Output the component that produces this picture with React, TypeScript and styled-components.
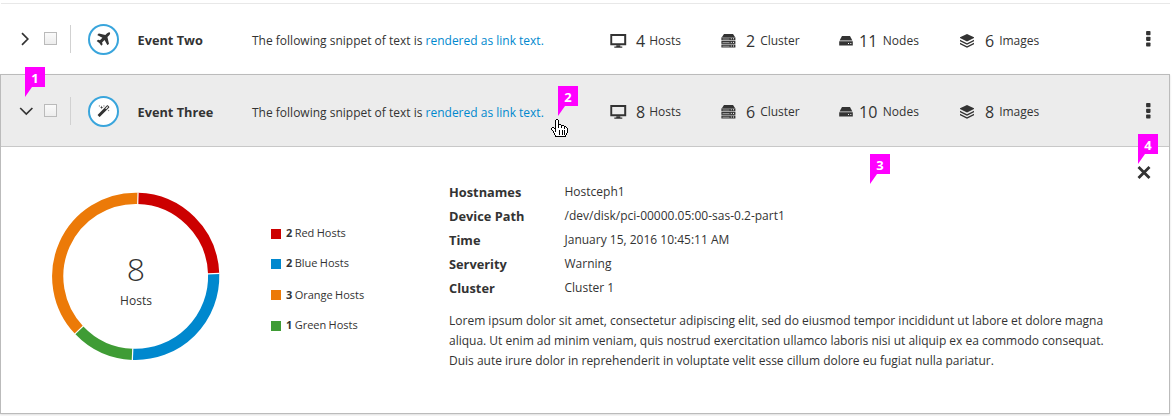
import React from "react";
import styled, { createGlobalStyle } from "styled-components";

const GlobalStyle = createGlobalStyle`
  *, *::before, *::after { box-sizing: border-box; }
  body {
    margin: 0;
    background: #fff;
    color: #333;
    font-family: "Open Sans", "Noto Sans", sans-serif;
    font-size: 12px;
    line-height: 20px;
  }
`;

const Page = styled.main`
  position: relative;
  width: 1172px;
  height: 416px;
  overflow: hidden;
  padding-top: 3px;
`;

const ListItem = styled.section`
  width: 1169px;
  margin-left: 1px;
  border-top: 1px solid #e8e8e8;
`;

const ExpandedItem = styled.section`
  width: 1170px;
  height: 340px;
  border: 1px solid #bbb;
  box-shadow: 0 1px 2px rgba(0, 0, 0, 0.14);
`;

const Row = styled.div<{ $active?: boolean }>`
  display: flex;
  align-items: center;
  height: ${(p) => (p.$active ? 72 : 70)}px;
  padding: ${(p) => (p.$active ? "1px 0 0" : "0")};
  background: ${(p) => (p.$active ? "#ececec" : "#fff")};
  border-bottom: ${(p) => (p.$active ? "1px solid #c8c8c8" : "0")};
`;

const Toggle = styled.button`
  display: flex;
  width: 14px;
  height: 14px;
  margin: 0 11px 0 17px;
  padding: 0;
  border: 0;
  background: none;
`;

const Check = styled.span`
  width: 13px;
  height: 13px;
  margin: 0 13px 1px 1px;
  border: 1px solid #bababa;
  background: linear-gradient(#fafafa, #ededed);
`;

const Divider = styled.span`
  width: 1px;
  height: 28px;
  margin-right: 17px;
  background: #d1d1d1;
`;

const IconRing = styled.span`
  display: flex;
  align-items: center;
  justify-content: center;
  width: 31px;
  height: 31px;
  margin: 1px 18.5px 0 0;
  border: 2px solid #39a5dc;
  border-radius: 50%;
  background: #fff;
`;

const Name = styled.strong`
  width: 114.5px;
  padding-top: 2px;
  font-size: 12.75px;
  font-weight: 700;
  white-space: nowrap;
`;

const Snippet = styled.span`
  width: 358px;
  padding-top: 3px;
  white-space: nowrap;
`;

const Link = styled.a`
  color: #0088ce;
`;

const Stat = styled.span<{ $width: number; $active?: boolean }>`
  display: flex;
  align-items: center;
  width: ${(p) => p.$width}px;
  padding-top: ${(p) => (p.$active ? 1 : 3)}px;
  white-space: nowrap;
`;

const StatIcon = styled.span<{ $width: number }>`
  display: flex;
  width: ${(p) => p.$width}px;
`;

const StatCount = styled.span<{ $gap: number }>`
  margin-right: ${(p) => p.$gap}px;
  font-size: 16px;
`;

const Kebab = styled.button`
  display: flex;
  padding: 0;
  border: 0;
  margin-left: 65px;
  background: none;
`;

const Body = styled.div`
  display: flex;
  position: relative;
  align-items: flex-start;
`;

const Donut = styled.figure`
  position: relative;
  width: 170px;
  height: 170px;
  margin: 44px 0 0 50px;
`;

const DonutLabel = styled.figcaption`
  position: absolute;
  inset: 0;
  display: flex;
  flex-direction: column;
  align-items: center;
  padding-top: 56px;
`;

const DonutTotal = styled.span`
  font-size: 32px;
  font-weight: 300;
  line-height: 44px;
`;

const Legend = styled.ul`
  width: 178px;
  margin: 77px 0 0 50px;
  padding: 0;
  list-style: none;
`;

const LegendItem = styled.li<{ $gap: number; $color: string }>`
  display: flex;
  align-items: center;
  height: 20px;
  margin-bottom: ${(p) => p.$gap}px;
  font-size: 11px;

  &::before {
    content: "";
    width: 10px;
    height: 10px;
    margin-right: 5px;
    background: ${(p) => p.$color};
  }
`;

const LegendText = styled.span<{ $lift: number }>`
  padding-bottom: ${(p) => p.$lift}px;
  white-space: nowrap;
  word-spacing: -0.5px;
`;

const Details = styled.div`
  padding-top: 33px;
`;

const Facts = styled.dl`
  display: grid;
  grid-template-columns: 115.5px auto;
  grid-auto-rows: 24px;
  margin: 0 0 11px;
  line-height: 24px;
`;

const Term = styled.dt`
  font-size: 12.8px;
  font-weight: 700;
`;

const Value = styled.dd`
  margin: 0;
`;

const Paragraph = styled.p`
  margin: 0;
  white-space: pre-line;
`;

const CloseButton = styled.button`
  position: absolute;
  top: 19px;
  right: 18px;
  display: flex;
  padding: 0;
  border: 0;
  background: none;
`;

const Callout = styled.span<{ $x: number; $y: number }>`
  position: absolute;
  left: ${(p) => p.$x}px;
  top: ${(p) => p.$y}px;
  width: 20px;
  height: 30px;
  background: #f0f;
  clip-path: polygon(0 0, 100% 0, 100% 20px, 7px 20px, 0 100%);
  color: #fff;
  font-size: 13px;
  font-weight: 700;
  line-height: 22px;
  text-align: center;
`;

const Pointer = styled.svg`
  position: absolute;
  left: 551px;
  top: 119px;
`;

const AngleRight = () => (
  <svg width="14" height="14" viewBox="0 0 14 14" fill="none" stroke="#333" strokeWidth="1.7">
    <path d="M4 1.2 9.8 7 4 12.8" />
  </svg>
);

const AngleDown = () => (
  <svg width="15" height="14" viewBox="0 0 15 14" fill="none" stroke="#333" strokeWidth="1.7" overflow="visible">
    <path d="M2.200 4 8.300 10 14.400 4" />
  </svg>
);

const PlaneIcon = () => (
  <svg width="17" height="17" viewBox="0 0 1792 1792" fill="#333">
    <path d="M1568 160q44 52 12 148t-108 172l-161 161 160 696q5 19-12 33l-128 96q-7 6-19 6-4 0-7-1-15-3-21-16l-279-508-259 259 53 194q5 17-8 31l-96 96q-9 9-23 9h-2q-15-2-24-13l-189-252-252-189q-11-7-13-23-1-13 9-25l96-97q9-9 23-9 6 0 8 1l194 53 259-259-508-279q-14-8-17-24-2-16 9-27l128-128q14-13 30-8l665 159 160-160q76-76 172-108t148 12z" />
  </svg>
);

const MagicIcon = () => (
  <svg width="13" height="13" viewBox="0 0 1792 1792" fill="#333">
    <path d="M1254 581l293-293-107-107-293 293zm447-293q0 27-18 45l-1286 1286q-18 18-45 18t-45-18l-198-198q-18-18-18-45t18-45l1286-1286q18-18 45-18t45 18l198 198q18 18 18 45zm-1351-190l98 30-98 30-30 98-30-98-98-30 98-30 30-98zm350 162l196 60-196 60-60 196-60-196-196-60 196-60 60-196zm930 478l98 30-98 30-30 98-30-98-98-30 98-30 30-98zm-640-640l98 30-98 30-30 98-30-98-98-30 98-30 30-98z" />
  </svg>
);

const ScreenIcon = () => (
  <svg width="17" height="14" viewBox="0 0 17 14" fill="#333">
    <path fillRule="evenodd" d="M.3 0h15.9v11.2H.3zM2.200 2v7.200h12V2z" />
    <path d="M6.3 11.2h4v1.3h2v1.3h-8v-1.3h2z" />
  </svg>
);

const ClusterIcon = () => (
  <svg width="15" height="14" viewBox="0 0 15 14">
    <path fill="#333" d="M3 0h9l2 3H1z" />
    {[3.3, 6.9, 10.5].map((y) => (
      <g key={y}>
        <rect x=".4" y={y} width="14" height="3" fill="#333" />
        <path d={`M1.5 ${y + 1.7}h7`} stroke="#aaa" strokeWidth=".9" />
        <path d={`M9.8 ${y + 1.5}h1M12 ${y + 1.5}h1`} stroke="#fff" strokeWidth="1" />
      </g>
    ))}
  </svg>
);

const NodeIcon = () => (
  <svg width="14" height="10" viewBox="0 0 14 10" fill="#333">
    <path d="M3 0h8l2.4 4.6H.6z" />
    <path fillRule="evenodd" d="M.2 5.3h13.6v4.2H.2zM9 7v1h1V7zM11.3 7v1h1V7z" />
  </svg>
);

const LayersIcon = () => (
  <svg width="14" height="14" viewBox="0 0 14 14" fill="#333">
    <path d="M7 0 14 3.2v.9L7 7.600 0 4.100v-.9z" />
    <path d="M0 5.8 7 9.200l7-3.400v1.500l-7 3.500-7-3.500z" />
    <path d="M0 8.8l7 3.4 7-3.4v1.500l-7 3.500-7-3.500z" />
  </svg>
);

const KebabIcon = () => (
  <svg width="6" height="16" viewBox="0 0 6 16" fill="#333">
    <rect x="1.1" y="0" width="4.4" height="4.2" rx=".8" />
    <rect x="1.1" y="5.7" width="4.4" height="4.2" rx=".8" />
    <rect x="1.1" y="11.4" width="4.4" height="4.2" rx=".8" />
  </svg>
);

const CloseIcon = () => (
  <svg width="14" height="13" viewBox="0 0 14 13" stroke="#333" strokeWidth="2.8">
    <path d="M1.500 1 12.500 12M12.500 1 1.500 12" />
  </svg>
);

const COLORS = { red: "#c00", blue: "#0088ce", orange: "#ec7a08", green: "#3f9c35" };

const polar = (r: number, deg: number) => {
  const a = (deg * Math.PI) / 180;
  return `${(84.7 + r * Math.sin(a)).toFixed(2)} ${(85.4 - r * Math.cos(a)).toFixed(2)}`;
};

const ARCS = [
  { from: 1.6, to: 88, color: COLORS.red },
  { from: 88, to: 182.3, color: COLORS.blue },
  { from: 182.3, to: 226.6, color: COLORS.green },
  { from: 226.6, to: 361.6, color: COLORS.orange },
];

const DonutChart = () => (
  <svg width="170" height="170" viewBox="0 0 170 170" fill="none">
    {ARCS.map((a) => (
      <path
        key={a.color}
        d={`M${polar(78, a.from)}A78 78 0 0 1 ${polar(78, a.to)}`}
        stroke={a.color}
        strokeWidth="11.2"
      />
    ))}
    {ARCS.map((a) => (
      <path key={a.color} d={`M${polar(72, a.from)}L${polar(84, a.from)}`} stroke="#fff" strokeWidth="1.2" />
    ))}
  </svg>
);

const STATS = [
  { label: "Hosts", icon: <ScreenIcon />, width: 111, iconWidth: 26, gap: 4 },
  { label: "Cluster", icon: <ClusterIcon />, width: 118, iconWidth: 25, gap: 5 },
  { label: "Nodes", icon: <NodeIcon />, width: 121, iconWidth: 20, gap: 5.5 },
  { label: "Images", icon: <LayersIcon />, width: 120, iconWidth: 25, gap: 5 },
];

interface EventRowProps {
  name: string;
  icon: React.ReactNode;
  counts: number[];
  active?: boolean;
}

const EventRow = ({ name, icon, counts, active }: EventRowProps) => (
  <Row $active={active}>
    <Toggle aria-label="Toggle details">{active ? <AngleDown /> : <AngleRight />}</Toggle>
    <Check />
    <Divider />
    <IconRing>{icon}</IconRing>
    <Name>{name}</Name>
    <Snippet>
      The following snippet of text is <Link>rendered as link text.</Link>
    </Snippet>
    {STATS.map((s, i) => (
      <Stat key={s.label} $width={s.width} $active={active}>
        <StatIcon $width={s.iconWidth}>{s.icon}</StatIcon>
        <StatCount $gap={s.gap}>{counts[i]}</StatCount>
        {s.label}
      </Stat>
    ))}
    <Kebab aria-label="Actions">
      <KebabIcon />
    </Kebab>
  </Row>
);

const LEGEND = [
  { count: 2, label: "Red Hosts", color: COLORS.red, gap: 10, lift: 2 },
  { count: 2, label: "Blue Hosts", color: COLORS.blue, gap: 11, lift: 2 },
  { count: 3, label: "Orange Hosts", color: COLORS.orange, gap: 11, lift: 0 },
  { count: 1, label: "Green Hosts", color: COLORS.green, gap: 0, lift: 2 },
];

const FACTS = [
  ["Hostnames", "Hostceph1"],
  ["Device Path", "/dev/disk/pci-00000.05:00-sas-0.2-part1"],
  ["Time", "January 15, 2016 10:45:11 AM"],
  ["Serverity", "Warning"],
  ["Cluster", "Cluster 1"],
];

const TEXT = `Lorem ipsum dolor sit amet, consectetur adipiscing elit, sed do eiusmod tempor incididunt ut labore et dolore magna
aliqua. Ut enim ad minim veniam, quis nostrud exercitation ullamco laboris nisi ut aliquip ex ea commodo consequat.
Duis aute irure dolor in reprehenderit in voluptate velit esse cillum dolore eu fugiat nulla pariatur.`;

// Pixel cursor: "#" is outline, "o" is fill.
const HAND = [
  ".....##..........",
  "....#oo#.........",
  "....#oo#.........",
  "....#oo#.........",
  "....#oo#.........",
  "....#oo###.......",
  "....#oo#oo###....",
  "....#oo#oo#oo##..",
  ".##.#oo#oo#oo#o#.",
  "#oo##oooooooo#oo#",
  "#ooo#ooooooooooo#",
  ".#oo#ooo#oo#o#oo#",
  "..#o#ooo#oo#o#oo#",
  "..#ooooo#oo#o#oo#",
  "...#oooo#oo#o#o#.",
  "...#oooo#oo#o#o#.",
  "....#ooooooooo#..",
  "....###########..",
];

const HandPointer = () => (
  <Pointer width="17" height="18" viewBox="0 0 17 18" shapeRendering="crispEdges">
    {HAND.flatMap((line, y) =>
      [...line].map((c, x) =>
        c === "." ? null : (
          <rect key={`${x}-${y}`} x={x} y={y} width="1" height="1" fill={c === "#" ? "#000" : "#fff"} />
        )
      )
    )}
  </Pointer>
);

export default function App() {
  return (
    <Page>
      <GlobalStyle />
      <ListItem>
        <EventRow name="Event Two" icon={<PlaneIcon />} counts={[4, 2, 11, 6]} />
      </ListItem>
      <ExpandedItem>
        <EventRow name="Event Three" icon={<MagicIcon />} counts={[8, 6, 10, 8]} active />
        <Body>
          <Donut>
            <DonutChart />
            <DonutLabel>
              <DonutTotal>8</DonutTotal>
              Hosts
            </DonutLabel>
          </Donut>
          <Legend>
            {LEGEND.map((l) => (
              <LegendItem key={l.label} $gap={l.gap} $color={l.color}>
                <LegendText $lift={l.lift}>
                  <b>{l.count}</b> {l.label}
                </LegendText>
              </LegendItem>
            ))}
          </Legend>
          <Details>
            <Facts>
              {FACTS.map(([term, value]) => (
                <React.Fragment key={term}>
                  <Term>{term}</Term>
                  <Value>{value}</Value>
                </React.Fragment>
              ))}
            </Facts>
            <Paragraph>{TEXT}</Paragraph>
          </Details>
          <CloseButton aria-label="Close">
            <CloseIcon />
          </CloseButton>
        </Body>
      </ExpandedItem>
      <Callout $x={25} $y={67}>1</Callout>
      <Callout $x={558} $y={86}>2</Callout>
      <Callout $x={870} $y={154}>3</Callout>
      <Callout $x={1138} $y={134}>4</Callout>
      <HandPointer />
    </Page>
  );
}
